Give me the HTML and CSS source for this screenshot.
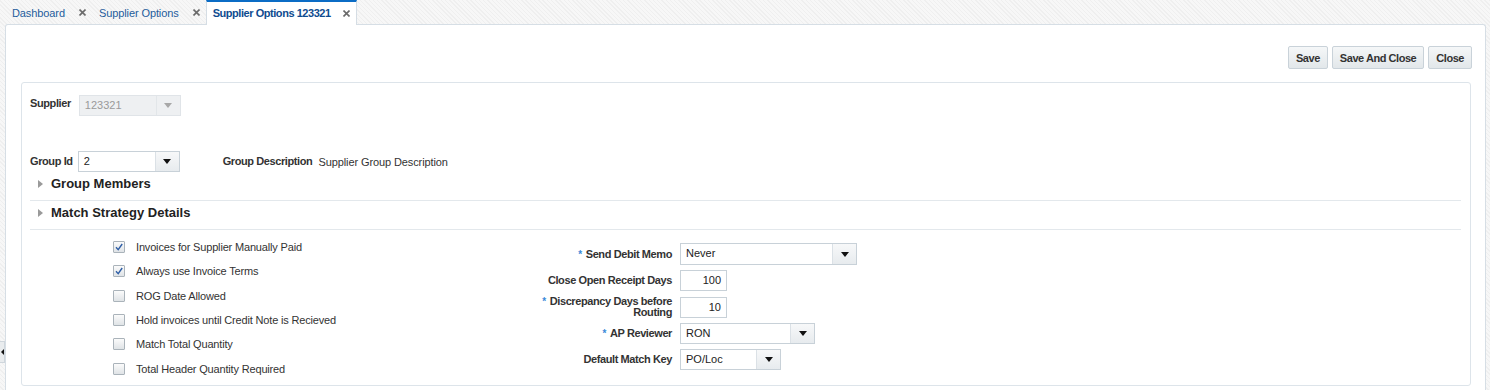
FILE: index.html
```html
<!DOCTYPE html>
<html lang="en">
<head>
  <meta charset="UTF-8" />
  <title>Supplier Options 123321</title>
  <link rel="stylesheet" href="styles.css">
</head>
<body>

  <div class="tabs">
    <div class="tab">
      <span class="tab-label">Dashboard</span>
      <svg class="tab-close" width="7" height="7" viewBox="0 0 7 7"><path d="M0.5 0.5L6.5 6.5M6.5 0.5L0.5 6.5" /></svg>
    </div>
    <div class="tab">
      <span class="tab-label">Supplier Options</span>
      <svg class="tab-close" width="7" height="7" viewBox="0 0 7 7"><path d="M0.5 0.5L6.5 6.5M6.5 0.5L0.5 6.5" /></svg>
    </div>
    <div class="tab active">
      <span class="tab-label">Supplier Options 123321</span>
      <svg class="tab-close" width="7" height="7" viewBox="0 0 7 7"><path d="M0.5 0.5L6.5 6.5M6.5 0.5L0.5 6.5" /></svg>
    </div>
  </div>

  <div class="main">
    <div class="toolbar">
      <button class="btn">Save</button>
      <button class="btn">Save And Close</button>
      <button class="btn">Close</button>
    </div>

    <div class="panel">
      <!-- Supplier -->
      <div class="field-row supplier-row">
        <span class="lbl">Supplier</span>
        <div class="combo disabled supplier-combo">
          <span class="combo-value">123321</span>
          <span class="combo-btn"><i class="caret"></i></span>
        </div>
      </div>

      <!-- Group -->
      <div class="field-row group-row">
        <span class="lbl">Group Id</span>
        <div class="combo group-combo">
          <span class="combo-value">2</span>
          <span class="combo-btn"><i class="caret"></i></span>
        </div>
        <span class="lbl desc-lbl">Group Description</span>
        <span class="val">Supplier Group Description</span>
      </div>

      <div class="disclosure"><i class="tri"></i>Group Members</div>
      <div class="disclosure"><i class="tri"></i>Match Strategy Details</div>

      <div class="details">
        <div class="checks">
          <div class="check-row"><span class="checkbox checked"><svg width="10" height="10" viewBox="0 0 10 10"><path d="M2 5.2L4.2 7.6L8.2 2" /></svg></span>Invoices for Supplier Manually Paid</div>
          <div class="check-row"><span class="checkbox checked"><svg width="10" height="10" viewBox="0 0 10 10"><path d="M2 5.2L4.2 7.6L8.2 2" /></svg></span>Always use Invoice Terms</div>
          <div class="check-row"><span class="checkbox"></span>ROG Date Allowed</div>
          <div class="check-row"><span class="checkbox"></span>Hold invoices until Credit Note is Recieved</div>
          <div class="check-row"><span class="checkbox"></span>Match Total Quantity</div>
          <div class="check-row"><span class="checkbox"></span>Total Header Quantity Required</div>
        </div>

        <div class="form-grid">
          <span class="lbl form-lbl"><i class="req">*</i>Send Debit Memo</span>
          <div class="combo debit-combo">
            <span class="combo-value">Never</span>
            <span class="combo-btn"><i class="caret"></i></span>
          </div>

          <span class="lbl form-lbl">Close Open Receipt Days</span>
          <div class="num-input">100</div>

          <span class="lbl form-lbl"><i class="req">*</i>Discrepancy Days before Routing</span>
          <div class="num-input">10</div>

          <span class="lbl form-lbl"><i class="req">*</i>AP Reviewer</span>
          <div class="combo reviewer-combo">
            <span class="combo-value">RON</span>
            <span class="combo-btn"><i class="caret"></i></span>
          </div>

          <span class="lbl form-lbl">Default Match Key</span>
          <div class="combo match-combo">
            <span class="combo-value">PO/Loc</span>
            <span class="combo-btn"><i class="caret"></i></span>
          </div>
        </div>
      </div>
    </div>
  </div>

  <div class="splitter"><i class="split-arrow"></i></div>

</body>
</html>
```

FILE: styles.css
```css
body {
  margin: 0;
  height: 390px;
  overflow: hidden;
  font-family: "Liberation Sans", Arial, sans-serif;
  font-size: 11px;
  color: #333;
  background-color: #f4f5f6;
  background-image: repeating-linear-gradient(45deg, #f7f7f7 0, #f7f7f7 2px, #efefef 2px, #efefef 3px);
}

/* Tabs */
.tabs {
  display: flex;
  height: 25px;
  padding-left: 5px;
}

.tab {
  display: flex;
  align-items: center;
  height: 25px;
  padding: 0 6px 0 7px;
  box-sizing: border-box;
}

.tab-label {
  color: #1f5d9c;
  letter-spacing: -0.1px;
  margin-right: 14px;
}

.tab-close path {
  stroke: #6a6a6a;
  stroke-width: 1.6;
  fill: none;
}

.tab.active {
  position: relative;
  z-index: 1;
  background: white;
  border-top: 2px solid #0b6cc5;
  border-left: 1px solid #d5dde4;
  border-right: 1px solid #d5dde4;
  padding: 0 6px 1px 6px;
}

.tab.active .tab-label {
  font-weight: bold;
  letter-spacing: -0.45px;
  color: #0f4c8f;
  margin-right: 12px;
}

/* Main */
.main {
  margin: -1px 4px 0 5px;
  background: white;
  border: 1px solid #d6dee5;
  border-bottom: none;
  border-radius: 3px 3px 0 0;
  height: 366px;
  box-sizing: border-box;
}

.toolbar {
  display: flex;
  justify-content: flex-end;
  gap: 4px;
  padding: 21px 13px 0 0;
}

.btn {
  height: 23px;
  padding: 0 7px;
  font-family: "Liberation Sans", Arial, sans-serif;
  font-size: 11px;
  font-weight: bold;
  letter-spacing: -0.45px;
  color: #333;
  background: linear-gradient(#f5f7f8, #e2e7ea);
  border: 1px solid #c9d2d9;
  border-radius: 2px;
}

.panel {
  margin: 13px 14px 0 15px;
  border: 1px solid #dde4ea;
  border-radius: 3px;
  padding: 12px 9px 4px 8px;
}

/* Fields */
.field-row {
  display: flex;
  align-items: center;
}

.supplier-row {
  align-items: flex-start;
}

.supplier-row .lbl {
  padding-top: 2px;
  margin-right: 8px;
}

.group-row {
  margin-top: 35px;
}

.group-row .lbl {
  margin-right: 5px;
}

.group-row .desc-lbl {
  margin-left: 43px;
  margin-right: 6px;
}

.lbl {
  font-weight: bold;
  letter-spacing: -0.4px;
  color: #333;
  line-height: 13px;
}

.val {
  color: #333;
  letter-spacing: -0.1px;
}

.combo {
  display: flex;
  height: 21px;
  box-sizing: border-box;
  border: 1px solid #c8d1d8;
  background: white;
}

.combo-value {
  flex: 1;
  padding-left: 5px;
  line-height: 19px;
  color: #222;
}

.combo-btn {
  width: 23px;
  display: flex;
  align-items: center;
  justify-content: center;
  border-left: 1px solid #dbe1e6;
  background: linear-gradient(#f7f8f9, #e7ebee);
}

.caret {
  width: 0;
  height: 0;
  border-left: 4px solid transparent;
  border-right: 4px solid transparent;
  border-top: 5px solid #111;
}

.combo.disabled {
  background: #eef0f2;
  border-color: #e0e4e8;
}

.combo.disabled .combo-value {
  color: #9a9a9a;
}

.combo.disabled .combo-btn {
  background: #eef0f2;
  border-left-color: #e2e6e9;
}

.combo.disabled .caret {
  border-top-color: #a8a8a8;
}

.supplier-combo { width: 102px; }
.group-combo { width: 102px; }
.debit-combo { width: 177px; height: 22px; }
.reviewer-combo { width: 135px; }
.match-combo { width: 101px; }

/* Disclosures */
.disclosure {
  display: flex;
  align-items: center;
  padding: 2px 0 6px 8px;
  line-height: 20px;
  font-size: 13px;
  font-weight: bold;
  color: #222;
  border-bottom: 1px solid #e3e8ec;
}

.tri {
  width: 0;
  height: 0;
  border-top: 4px solid transparent;
  border-bottom: 4px solid transparent;
  border-left: 5px solid #9a9a9a;
  margin-right: 8px;
}

/* Details */
.details {
  display: flex;
  align-items: flex-start;
}

.checks {
  width: 510px;
  padding: 5px 0 0 83px;
  box-sizing: border-box;
}

.check-row {
  display: flex;
  align-items: center;
  height: 24.3px;
  color: #333;
  letter-spacing: -0.17px;
}

.checkbox {
  width: 12px;
  height: 12px;
  box-sizing: border-box;
  border: 1px solid #aab3ba;
  border-radius: 1px;
  background: linear-gradient(#fbfbfb, #dfe3e6);
  margin-right: 11px;
  display: flex;
  align-items: center;
  justify-content: center;
}

.checkbox path {
  stroke: #2f5ea6;
  stroke-width: 1.4;
  fill: none;
}

.form-grid {
  display: grid;
  grid-template-columns: 132px auto;
  column-gap: 8px;
  row-gap: 5px;
  align-items: center;
  justify-items: start;
  padding-top: 13px;
}

.form-lbl {
  justify-self: end;
  text-align: right;
  line-height: 11px;
}

.req {
  font-style: normal;
  color: #3b8ad9;
  font-size: 10px;
  vertical-align: top;
  margin-right: 4px;
}

.num-input {
  width: 47px;
  height: 21px;
  box-sizing: border-box;
  border: 1px solid #c8d1d8;
  text-align: right;
  padding-right: 5px;
  line-height: 19px;
  color: #222;
}

/* Splitter handle at the left edge */
.splitter {
  position: absolute;
  left: 0;
  top: 341px;
  width: 4px;
  height: 20px;
  background: #e9ecee;
  border: 1px solid #cfd6dc;
  border-left: none;
  display: flex;
  align-items: center;
  justify-content: center;
}

.split-arrow {
  width: 0;
  height: 0;
  border-top: 3px solid transparent;
  border-bottom: 3px solid transparent;
  border-right: 3px solid #111;
}
```
